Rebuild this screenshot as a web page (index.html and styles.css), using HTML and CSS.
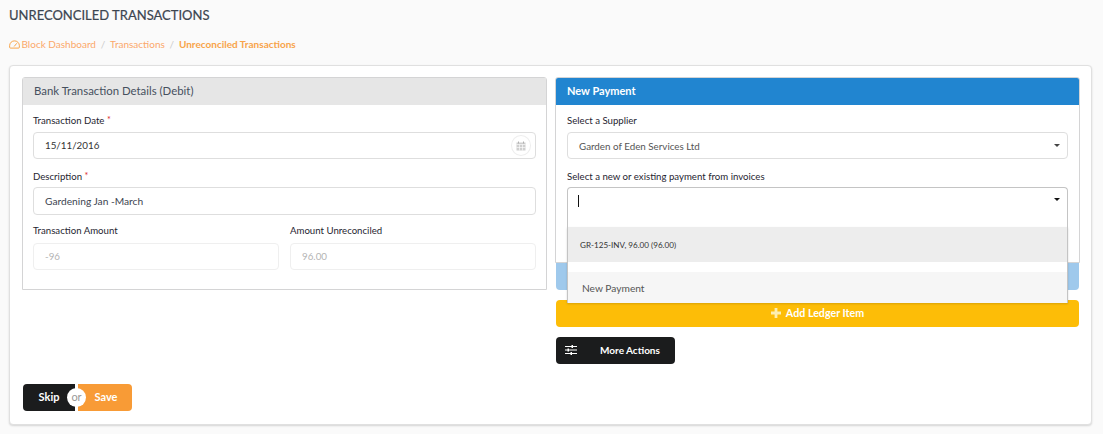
FILE: index.html
```html
<!DOCTYPE html>
<html lang="en">
<head>
<meta charset="utf-8">
<title>Unreconciled Transactions</title>
<link rel="stylesheet" href="styles.css">
</head>
<body>
<h1 class="page-title">UNRECONCILED TRANSACTIONS</h1>
<nav class="crumbs">
  <svg class="crumb-icon" viewBox="0 0 12 10" width="11" height="9"><path d="M1.600 9h8.800a1 1 0 0 0 1-1V6.200A5.300 5.300 0 0 0 6 1 5.300 5.300 0 0 0 .6 6.200V8a1 1 0 0 0 1 1z" fill="none" stroke="currentColor"/><path d="M5.600 7.200 8.600 3.600" stroke="currentColor" fill="none"/></svg>
  <a class="crumb">Block Dashboard</a><span class="sep">/</span><a class="crumb">Transactions</a><span class="sep">/</span><span class="crumb-active">Unreconciled Transactions</span>
</nav>
<main class="card">
  <div class="columns">
    <section class="panel panel-left">
      <header class="panel-head">Bank Transaction Details (Debit)</header>
      <div class="panel-body">
        <label class="label">Transaction Date <span class="req">*</span></label>
        <div class="input input-date">15/11/2016
          <span class="cal"><svg viewBox="0 0 10 10" width="10" height="10"><path d="M.5 1.500h9v8h-9z" fill="#cfcfcf"/><path d="M.5 3.500h9M3.500 3.500v6M6.500 3.500v6M.5 6.500h9" stroke="#fff" stroke-width=".6"/><path d="M2.500 .5v2M7.500 .5v2" stroke="#b0b0b0"/></svg></span>
        </div>
        <label class="label label-gap">Description <span class="req">*</span></label>
        <div class="input input-tall">Gardening Jan -March</div>
        <div class="pair">
          <div class="field"><label class="label">Transaction Amount</label><div class="input input-off">-96</div></div>
          <div class="field"><label class="label">Amount Unreconciled</label><div class="input input-off">96.00</div></div>
        </div>
      </div>
    </section>
    <div class="right">
      <section class="panel panel-right">
        <header class="panel-head head-blue">New Payment</header>
        <div class="panel-body body-wide">
          <label class="label">Select a Supplier</label>
          <div class="input select">Garden of Eden Services Ltd<span class="caret"></span></div>
          <label class="label label-gap">Select a new or existing payment from invoices</label>
          <div class="combo">
            <div class="input select select-open"><span class="cursor"></span><span class="caret caret-dark"></span></div>
            <div class="menu">
              <div class="opt opt-invoice">GR-125-INV, 96.00 (96.00)</div>
              <div class="opt opt-new">New Payment</div>
            </div>
          </div>
        </div>
      </section>
      <div class="btn-blue"></div>
      <button class="btn btn-yellow">
        <svg class="plus" viewBox="0 0 10 10" width="10" height="10"><path d="M3.600 0h2.800v3.600H10v2.800H6.400V10H3.600V6.400H0V3.600h3.600z" fill="currentColor"/></svg>
        Add Ledger Item
      </button>
      <button class="btn btn-more">
        <span class="more-icon"><svg viewBox="0 0 12 10" width="12" height="10"><path d="M0 1.500h12M0 5h12M0 8.500h12" stroke="#fff"/><path d="M6.500 0h1.500v3h-1.500zM2.500 3.500H4v3H2.500zM5.500 7H7v3H5.500z" fill="#fff"/></svg></span>
        <span class="more-text">More Actions</span>
      </button>
    </div>
  </div>
  <div class="actions">
    <button class="act act-skip">Skip</button>
    <span class="or">or</span>
    <button class="act act-save">Save</button>
  </div>
</main>
</body>
</html>
```
FILE: styles.css
```css
* { box-sizing: border-box; }
html, body { height: 100%; }
body {
  margin: 0;
  padding: 0 11px 0 9px;
  background: #fafafa;
  font-family: Lato, "Liberation Sans", sans-serif;
  color: rgba(0,0,0,.87);
  overflow: hidden;
}
.page-title {
  margin: 0;
  padding-top: 7px;
  height: 33px;
  font-size: 13px;
  line-height: 17px;
  font-weight: 400;
  color: #3c4550;
  -webkit-text-stroke: .2px #3c4550;
}
.crumbs {
  height: 22px;
  margin-bottom: 10px;
  display: flex;
  align-items: center;
  font-size: 10px;
  color: #fbb57a;
  white-space: nowrap;
}
.crumb-icon { margin-right: 1.500px; color: #f89b36; }
.crumb { color: #fba86a; }
.sep { margin: 0 4.800px; color: #ccc; }
.crumb-active { color: #f89b36; font-weight: 700; opacity: .9; }
.card {
  height: 360px;
  background: #fff;
  border: 1px solid #e0e0e0;
  border-radius: 4px;
  box-shadow: 0 1px 2px rgba(0,0,0,.15);
  padding: 11px 11px 11px 12px;
}
.columns { display: flex; gap: 8px; align-items: flex-start; }
.panel {
  width: 525px;
  flex: none;
  border: 1px solid #d4d4d5;
  border-radius: 3px 3px 0 0;
  background: #fff;
}
.panel-left { height: 213px; }
.panel-right { height: 186px; }
.panel-head {
  height: 27px;
  background: #e6e6e6;
  padding-left: 11px;
  font-size: 11.400px;
  line-height: 26px;
  color: #46505e;
}
.head-blue {
  background: #2185d0;
  color: #fff;
  font-weight: 700;
  font-size: 11px;
  line-height: 26px;
  border-radius: 2px 2px 0 0;
}
.panel-body { padding: 8px 10px 0; }
.body-wide { padding: 8px 11px 0; }
.label {
  display: block;
  height: 19px;
  font-size: 9.650px;
  line-height: 13px;
  color: #1f2530;
}
.body-wide .label { line-height: 15px; }
.label-gap { margin-top: 9px; height: 19px; padding-top: 1px; }
.req { color: #db2828; font-size: 9px; vertical-align: 1px; }
.input {
  position: relative;
  height: 27px;
  border: 1px solid #dedede;
  border-radius: 4px;
  background: #fff;
  padding-left: 11px;
  font-size: 9.800px;
  line-height: 26px;
  color: #333;
}
.input-date { line-height: 25px; }
.input-tall { height: 28px; line-height: 27px; color: #3d4450; font-size: 10.200px; }
.cal {
  position: absolute;
  right: 4px;
  top: 2px;
  width: 20px;
  height: 21px;
  border: 1px solid #eee;
  border-radius: 50%;
  display: flex;
  align-items: center;
  justify-content: center;
}
.pair { display: flex; gap: 11px; margin-top: 9px; }
.field { flex: 1; }
.input-off { border-color: #efefef; color: #b4b4b4; line-height: 25px; }
.select { color: #555; }
.caret {
  position: absolute;
  right: 7px;
  top: 11px;
  border: 3px solid transparent;
  border-top: 3px solid #444;
  border-bottom: 0;
}
.caret-dark { border-top-color: #111; top: 10px; }
.combo { position: relative; }
.select-open {
  height: 40px;
  border-color: #c4c4c4;
  border-bottom: 0;
  border-radius: 4px 4px 0 0;
}
.cursor {
  position: absolute;
  left: 10px;
  top: 7px;
  width: 1px;
  height: 12px;
  background: #111;
}
.menu {
  position: absolute;
  left: 0;
  right: 0;
  top: 40px;
  height: 76px;
  background: #fff;
  border: 1px solid #c4c4c4;
  border-top: 0;
  box-shadow: 0 1px 2px rgba(0,0,0,.15);
  z-index: 5;
}
.opt { white-space: nowrap; }
.opt-invoice {
  height: 35px;
  background: #ededed;
  padding-left: 12px;
  font-size: 8.100px;
  line-height: 36px;
  color: #333;
}
.opt-new {
  height: 31px;
  margin-top: 10px;
  background: #f6f6f6;
  padding-left: 14px;
  font-size: 10.200px;
  line-height: 33px;
  color: #555;
}
.right { width: 525px; flex: none; display: flex; flex-direction: column; align-items: flex-start; }
.btn-blue {
  width: 523px;
  height: 27px;
  margin-left: 1px;
  background: #9fc9ec;
  border-radius: 0 0 4px 4px;
}
.btn {
  border: 0;
  font-family: inherit;
  color: #fff;
  font-weight: 700;
  font-size: 10.700px;
  height: 27px;
  border-radius: 4px;
  padding: 0 0 2px;
}
.btn-yellow {
  width: 523px;
  margin: 10px 0 0 1px;
  background: #fdbd07;
  display: flex;
  align-items: center;
  justify-content: center;
  gap: 5px;
}
.plus { color: #fdeeb0; }
.btn-more {
  width: 119px;
  margin: 10px 0 0 1px;
  background: #1b1c1d;
  font-size: 10px;
  display: flex;
  align-items: center;
}
.more-icon { display: flex; margin-left: 9px; }
.more-text { margin-left: 23px; }
.actions {
  position: relative;
  display: flex;
  margin: 20px 0 0 1px;
  width: 109px;
}
.act {
  border: 0;
  height: 27px;
  font-family: inherit;
  color: #fff;
  font-weight: 700;
  font-size: 11px;
  padding: 0 0 2px;
}
.act-skip {
  width: 52px;
  background: #1b1c1d;
  border-radius: 4px 0 0 4px;
  margin-right: 3px;
}
.act-save {
  width: 54px;
  padding-left: 2px;
  background: #f89b36;
  border-radius: 0 4px 4px 0;
}
.or {
  position: absolute;
  left: 44px;
  top: 4px;
  width: 19px;
  height: 19px;
  border-radius: 50%;
  background: #fff;
  color: #999;
  font-size: 11px;
  line-height: 17px;
  text-align: center;
}
```
